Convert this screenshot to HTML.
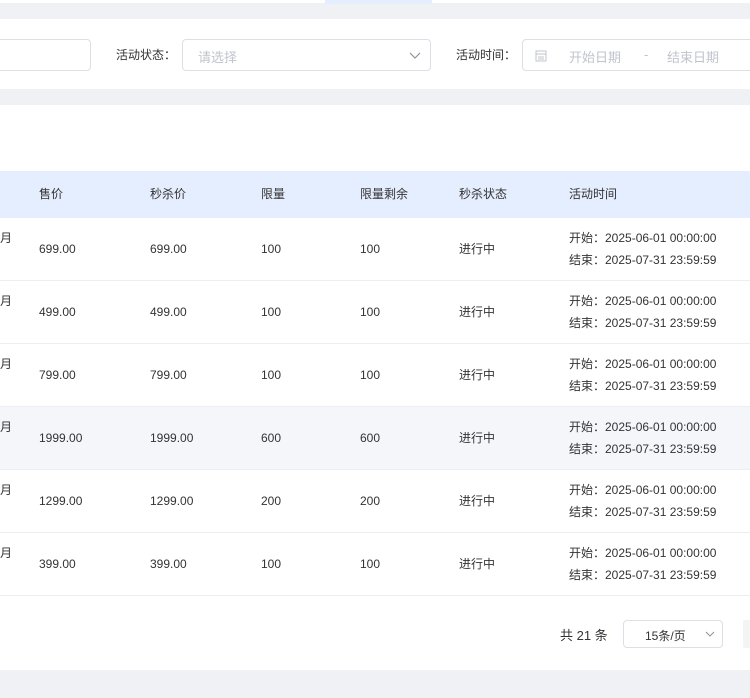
<!DOCTYPE html><html><head><meta charset="utf-8"><style>
*{margin:0;padding:0;box-sizing:border-box}
body{width:750px;height:698px;overflow:hidden;background:#f0f1f5;font-family:"Liberation Sans","Noto Sans CJK SC",sans-serif;font-size:12px;color:#333;position:relative}
.a{position:absolute}
.box{position:absolute;border:1px solid #dcdfe6;border-radius:4px;background:#fff}
.ph{color:#c0c4cc;font-size:13px}
.lbl{font-size:12px;color:#333}
.row{position:absolute;left:0;width:750px;height:63px;background:#fff;border-bottom:1px solid #ebeef5}
.c{position:absolute;top:0;line-height:63px;font-size:12px;color:#333}
.t{position:absolute;left:569px;font-size:12px;color:#333;line-height:22px;top:9px}
</style></head><body>
<div class="a" style="left:0;top:0;width:750px;height:3px;background:#fff"></div>
<div class="a" style="left:325px;top:0;width:107px;height:4px;background:#e5eefe"></div>
<div class="a" style="left:0;top:19px;width:750px;height:70px;background:#fff"></div>
<div class="box" style="left:-10px;top:39px;width:101px;height:32px"></div>
<div class="a lbl" style="left:116px;top:46px">活动状态：</div>
<div class="box" style="left:182px;top:39px;width:249px;height:32px"><span class="a ph" style="left:15px;top:7px">请选择</span>
<svg class="a" style="left:226px;top:10px" width="12" height="10" viewBox="0 0 12 10"><path d="M1 3l5 5 5-5" fill="none" stroke="#909399" stroke-width="1.2"/></svg></div>
<div class="a lbl" style="left:456px;top:46px">活动时间：</div>
<div class="box" style="left:522px;top:39px;width:240px;height:32px">
<svg class="a" style="left:12px;top:9px" width="12" height="13" viewBox="0 0 12 13"><rect x="1" y="2" width="10" height="10" fill="none" stroke="#c0c4cc"/><path d="M1 5h10M3 8h6M3 10h6" stroke="#c0c4cc"/></svg>
<span class="a ph" style="left:46px;top:7px">开始日期</span><span class="a ph" style="left:121px;top:7px">-</span><span class="a ph" style="left:144px;top:7px">结束日期</span></div>
<div class="a" style="left:0;top:105px;width:750px;height:565px;background:#fff"></div>
<div class="a" style="left:0;top:171px;width:750px;height:47px;background:#e5eefe;color:#555">
<span class="c" style="line-height:46px;left:39px">售价</span><span class="c" style="line-height:46px;left:150px">秒杀价</span><span class="c" style="line-height:46px;left:261px">限量</span><span class="c" style="line-height:46px;left:360px">限量剩余</span><span class="c" style="line-height:46px;left:459px">秒杀状态</span><span class="c" style="line-height:46px;left:569px">活动时间</span></div>
<div class="row" style="top:218px"><span class="a" style="left:0;top:11px">月</span><span class="c" style="left:39px">699.00</span><span class="c" style="left:150px">699.00</span><span class="c" style="left:261px">100</span><span class="c" style="left:360px">100</span><span class="c" style="left:459px">进行中</span><div class="t">开始：2025-06-01 00:00:00<br>结束：2025-07-31 23:59:59</div></div>
<div class="row" style="top:281px"><span class="a" style="left:0;top:11px">月</span><span class="c" style="left:39px">499.00</span><span class="c" style="left:150px">499.00</span><span class="c" style="left:261px">100</span><span class="c" style="left:360px">100</span><span class="c" style="left:459px">进行中</span><div class="t">开始：2025-06-01 00:00:00<br>结束：2025-07-31 23:59:59</div></div>
<div class="row" style="top:344px"><span class="a" style="left:0;top:11px">月</span><span class="c" style="left:39px">799.00</span><span class="c" style="left:150px">799.00</span><span class="c" style="left:261px">100</span><span class="c" style="left:360px">100</span><span class="c" style="left:459px">进行中</span><div class="t">开始：2025-06-01 00:00:00<br>结束：2025-07-31 23:59:59</div></div>
<div class="row" style="top:407px;background:#f4f6fa"><span class="a" style="left:0;top:11px">月</span><span class="c" style="left:39px">1999.00</span><span class="c" style="left:150px">1999.00</span><span class="c" style="left:261px">600</span><span class="c" style="left:360px">600</span><span class="c" style="left:459px">进行中</span><div class="t">开始：2025-06-01 00:00:00<br>结束：2025-07-31 23:59:59</div></div>
<div class="row" style="top:470px"><span class="a" style="left:0;top:11px">月</span><span class="c" style="left:39px">1299.00</span><span class="c" style="left:150px">1299.00</span><span class="c" style="left:261px">200</span><span class="c" style="left:360px">200</span><span class="c" style="left:459px">进行中</span><div class="t">开始：2025-06-01 00:00:00<br>结束：2025-07-31 23:59:59</div></div>
<div class="row" style="top:533px"><span class="a" style="left:0;top:11px">月</span><span class="c" style="left:39px">399.00</span><span class="c" style="left:150px">399.00</span><span class="c" style="left:261px">100</span><span class="c" style="left:360px">100</span><span class="c" style="left:459px">进行中</span><div class="t">开始：2025-06-01 00:00:00<br>结束：2025-07-31 23:59:59</div></div>
<div class="a" style="left:560px;top:625px;font-size:13px;color:#333">共 21 条</div>
<div class="box" style="left:623px;top:620px;width:100px;height:28px"><span class="a" style="left:21px;top:6px;font-size:12px;color:#333">15条/页</span>
<svg class="a" style="left:81px;top:9px" width="10" height="8" viewBox="0 0 10 8"><path d="M1 2l4 4 4-4" fill="none" stroke="#909399"/></svg></div>
<div class="a" style="left:743px;top:620px;width:10px;height:28px;background:#f4f4f5;border-radius:2px"></div>
</body></html>
